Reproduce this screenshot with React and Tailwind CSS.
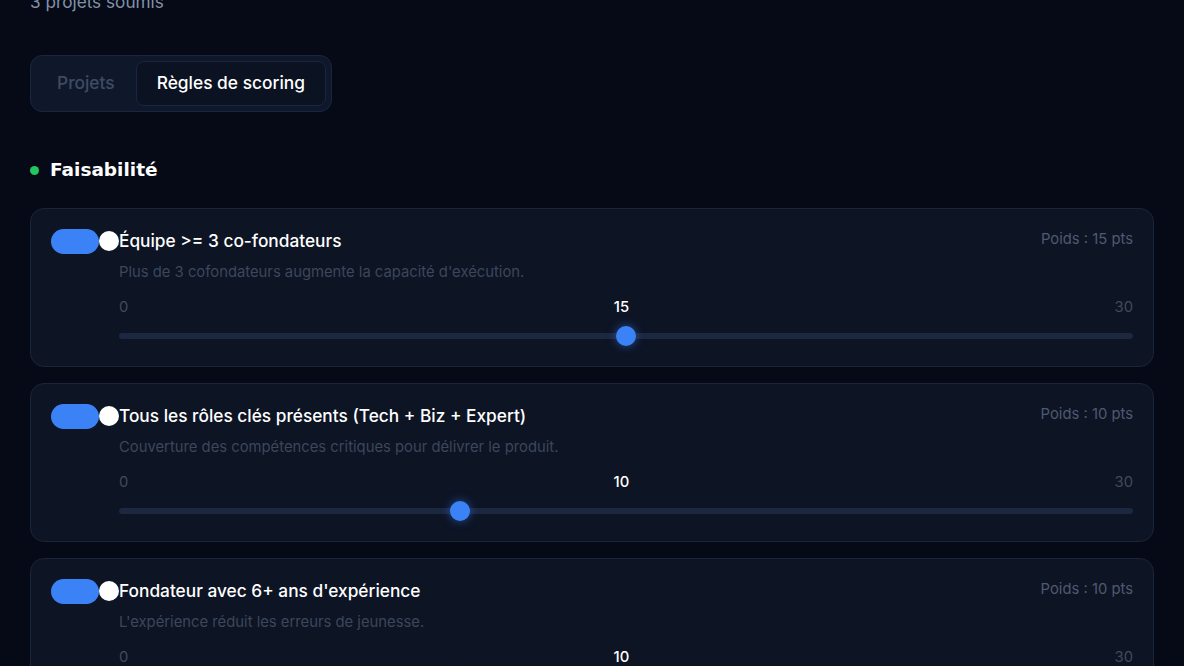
import React from "react";

const rules = [
  {
    title: "Équipe >= 3 co-fondateurs",
    desc: "Plus de 3 cofondateurs augmente la capacité d'exécution.",
    value: 15,
  },
  {
    title: "Tous les rôles clés présents (Tech + Biz + Expert)",
    desc: "Couverture des compétences critiques pour délivrer le produit.",
    value: 10,
  },
  {
    title: "Fondateur avec 6+ ans d'expérience",
    desc: "L'expérience réduit les erreurs de jeunesse.",
    value: 10,
  },
];

function Slider({ value, max }) {
  const pct = value / max;
  return (
    <div className="relative h-5 mt-[9px] flex items-center">
      <div className="h-[6px] w-full rounded-full bg-[#1c2740]" />
      <div
        className="absolute top-0 h-5 w-5 rounded-full bg-[#3b82f6] shadow-[0_0_10px_rgba(59,130,246,0.55)]"
        style={{ left: `calc(${pct} * (100% - 20px))` }}
      />
    </div>
  );
}

function RuleCard({ rule }) {
  return (
    <div className="rounded-[14px] border border-[#1b2539] bg-[#0d1424] p-5 flex items-start">
      <div className="flex items-center h-6 shrink-0">
        <div className="h-[25px] w-12 rounded-full bg-[#3b82f6]" />
        <div className="h-5 w-5 rounded-full bg-white" />
      </div>
      <div className="flex-1 min-w-0">
        <div className="flex justify-between items-start">
          <div className="text-[17.3px] leading-6 font-medium text-white">{rule.title}</div>
          <div className="text-[14.8px] leading-5 text-[#4d5a70]">Poids : {rule.value} pts</div>
        </div>
        <div className="mt-[9px] text-[14.8px] leading-5 text-[#3c475a]">{rule.desc}</div>
        <div className="mt-[15px] flex justify-between text-[14.8px] leading-5">
          <span className="text-[#3f4b5e]">0</span>
          <span className="text-white font-medium">{rule.value}</span>
          <span className="text-[#3f4b5e]">30</span>
        </div>
        <Slider value={rule.value} max={30} />
      </div>
    </div>
  );
}

export default function App() {
  return (
    <div
      className="h-[666px] w-full overflow-hidden bg-[#050a16]"
      style={{ fontFamily: "Inter, 'Noto Sans', sans-serif" }}
    >
      <div className="px-[30px] mt-[-10px]">
        <p className="text-[17.2px] leading-6 text-[#8391a8]">3 projets soumis</p>

        <div className="mt-[41px] inline-flex rounded-xl border border-[#1a2540] bg-[#0f182b] p-[5px]">
          <button className="h-[45px] px-5 rounded-lg text-[17.35px] font-medium text-[#3f4b62] border border-transparent">
            Projets
          </button>
          <button className="h-[45px] px-5 rounded-lg text-[17.35px] font-medium text-white bg-[#0b1221] border border-[#1a2540]">
            Règles de scoring
          </button>
        </div>

        <div className="mt-[44px] flex items-center gap-[11px] h-7">
          <span className="h-[9px] w-[9px] rounded-full bg-[#22c55e]" />
          <h2
            className="text-[18.5px] font-bold text-white leading-7"
            style={{ fontFamily: "'DejaVu Sans', sans-serif" }}
          >
            Faisabilité
          </h2>
        </div>

        <div className="mt-6 flex flex-col gap-4">
          {rules.map((r) => (
            <RuleCard key={r.title} rule={r} />
          ))}
        </div>
      </div>
    </div>
  );
}
